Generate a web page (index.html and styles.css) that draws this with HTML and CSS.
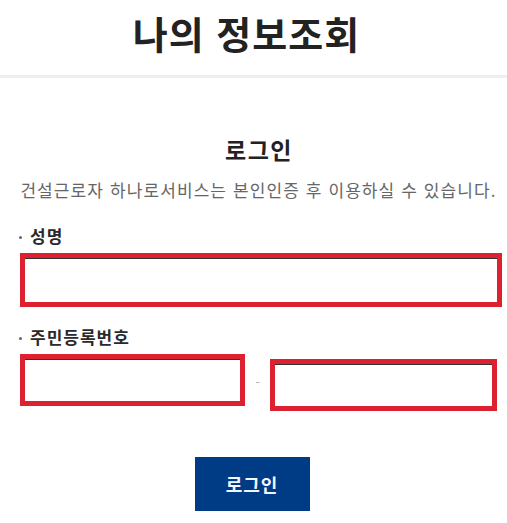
FILE: index.html
```html
<!DOCTYPE html>
<html lang="ko">
<head>
    <meta charset="UTF-8">
    <meta name="viewport" content="width=device-width, initial-scale=1.0">
    <title>나의 정보조회</title>
    <link rel="stylesheet" href="styles.css">
</head>
<body>
    <div id="top">
        <h1>나의 정보조회</h1>
    </div>
    <div id="login">
        <h2>로그인</h2>
        <p class="desc">건설근로자 하나로서비스는 본인인증 후 이용하실 수 있습니다.</p>
        <div class="field">
            <label class="tit">성명</label>
            <input type="text" id="name" class="box">
        </div>
        <div class="field">
            <label class="tit">주민등록번호</label>
            <div class="jumin">
                <input type="text" id="jumin1" class="box">
                <span class="dash">-</span>
                <input type="password" id="jumin2" class="box">
            </div>
        </div>
        <div class="btns">
            <button id="btnLogin">로그인</button>
        </div>
    </div>
</body>
</html>
```

FILE: styles.css
```css
*{margin: 0;padding: 0;box-sizing: border-box;}
body{
    font-family: "Noto Sans CJK KR", "Noto Sans", sans-serif;
    color: #222;
    background: #fff;
}
#top{
    height: 78px;
    border-bottom: 3px solid #eee;
    display: flex;
    justify-content: center;
}
#top h1{
    font-size: 38px;
    font-weight: 700;
    letter-spacing: 1px;
    line-height: 1;
    padding-top: 14px;
    margin-right: 14px;
}
#login{
    margin-left: 20px;
    width: 482px;
    padding-top: 56px;
}
#login h2{
    text-align: center;
    font-size: 23px;
    font-weight: 700;
    letter-spacing: 1.5px;
    line-height: 30px;
    margin-right: 4px;
}
.desc{
    text-align: center;
    color: #666;
    font-size: 17px;
    letter-spacing: 1.1px;
    line-height: 24px;
    margin-top: 14px;
    margin-right: 5px;
}
.field{margin-top: 22px;}
.field + .field{margin-top: 18px;}
.tit{
    display: block;
    position: relative;
    padding-left: 10px;
    font-size: 17px;
    font-weight: 700;
    letter-spacing: 1px;
    line-height: 24px;
    margin-bottom: 5px;
    color: #2a2a2a;
}
.tit::before{
    content: "";
    position: absolute;
    left: -1px;
    top: 12px;
    width: 3px;
    height: 3px;
    border-radius: 50%;
    background: #666;
}
.box{
    display: block;
    height: 54px;
    width: 100%;
    border: 5px solid #dc2230;
    box-shadow: inset 0 1px 0 #333;
    background: #fff;
    outline: none;
}
.jumin{
    display: flex;
    align-items: flex-start;
}
#jumin1{width: 225px;height: 52px;}
#jumin2{width: 227px;height: 52px;margin-top: 5px;}
.dash{
    width: 25px;
    text-align: center;
    color: #aaa;
    font-size: 12px;
    line-height: 1;
    padding-top: 22px;
}
.btns{
    display: flex;
    justify-content: center;
    margin-top: 46px;
    margin-right: 18px;
}
#btnLogin{
    width: 115px;
    height: 54px;
    border: 0;
    background: #003b85;
    color: #f2f6ff;
    font-family: inherit;
    font-size: 18px;
    font-weight: 700;
    letter-spacing: 1px;
}
```
